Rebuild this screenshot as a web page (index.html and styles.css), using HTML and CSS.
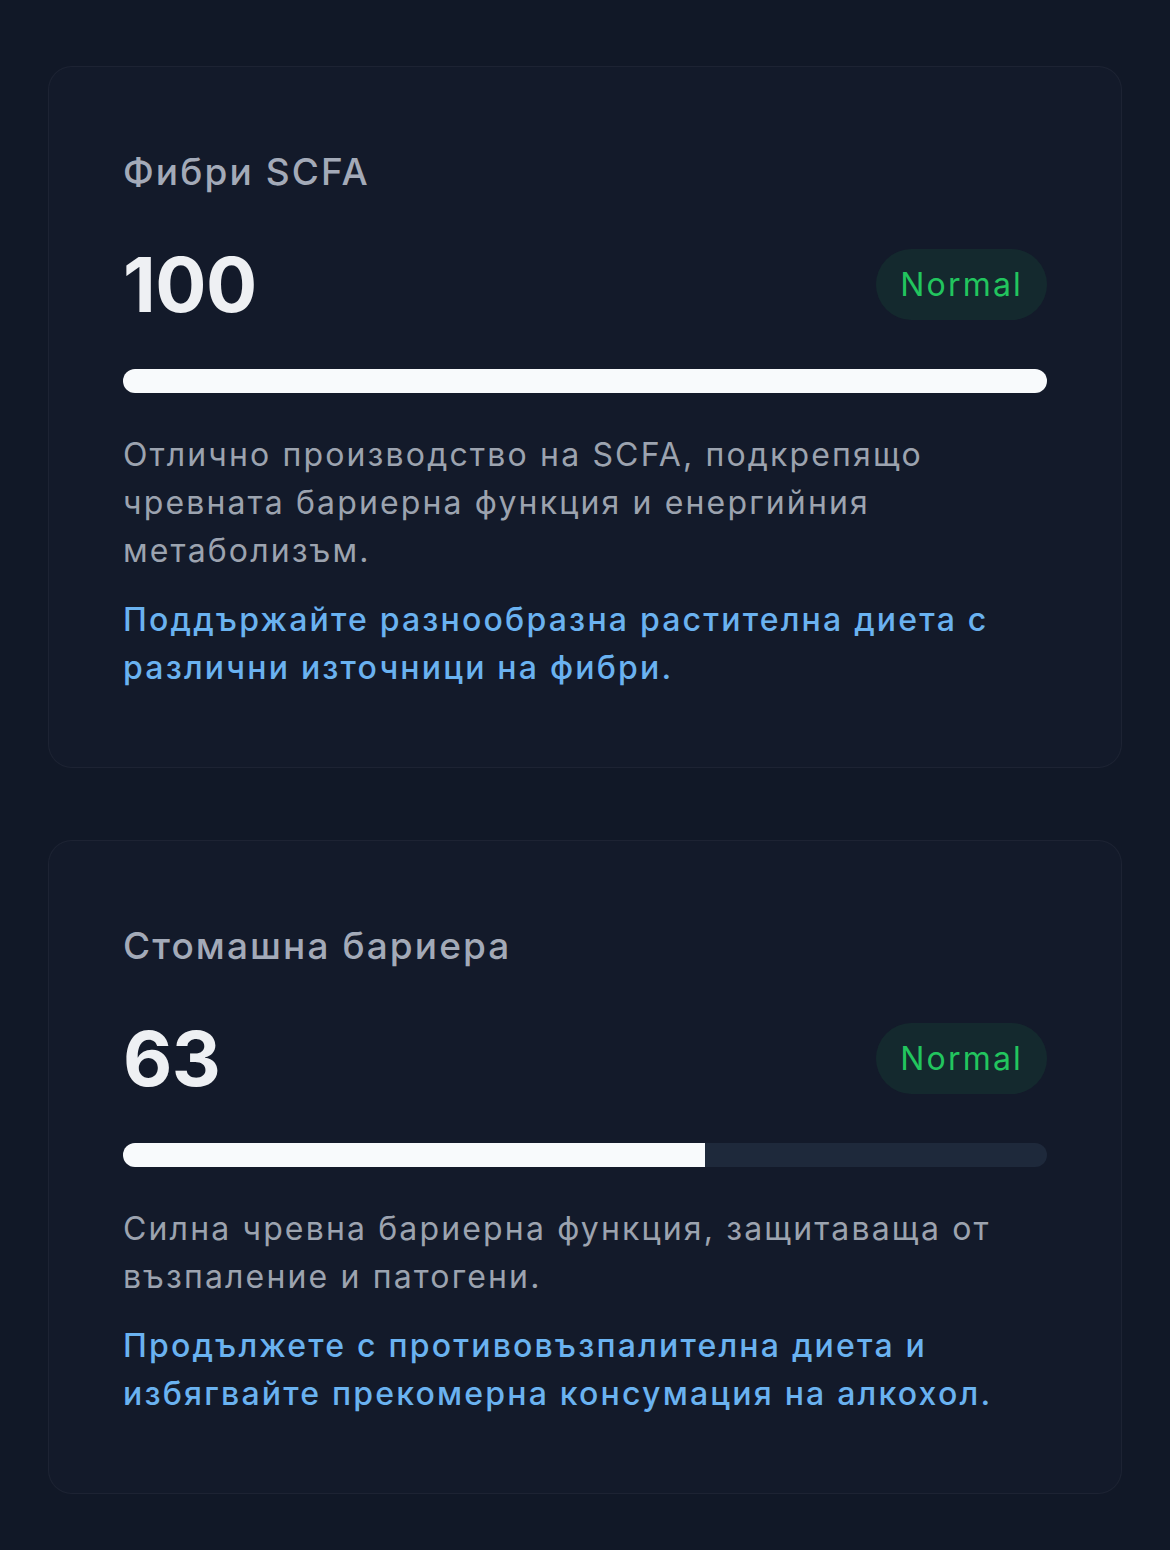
FILE: index.html
```html
<!DOCTYPE html>
<html lang="bg">
<head>
<meta charset="utf-8">
<link rel="stylesheet" href="styles.css">
</head>
<body>
<main class="list">
  <section class="card">
    <h2 class="title">Фибри SCFA</h2>
    <div class="row">
      <span class="score">100</span>
      <span class="badge">Normal</span>
    </div>
    <div class="track"><div class="fill" style="width:100%"></div></div>
    <p class="desc">Отлично производство на SCFA, подкрепящо чревната бариерна функция и енергийния метаболизъм.</p>
    <p class="rec">Поддържайте разнообразна растителна диета с различни източници на фибри.</p>
  </section>
  <section class="card">
    <h2 class="title">Стомашна бариера</h2>
    <div class="row">
      <span class="score">63</span>
      <span class="badge">Normal</span>
    </div>
    <div class="track"><div class="fill" style="width:63%"></div></div>
    <p class="desc">Силна чревна бариерна функция, защитаваща от възпаление и патогени.</p>
    <p class="rec">Продължете с противовъзпалителна диета и избягвайте прекомерна консумация на алкохол.</p>
  </section>
</main>
</body>
</html>
```

FILE: styles.css
```css
* { box-sizing: border-box; }
html, body { margin: 0; padding: 0; }
body {
  background: #111827;
  font-family: Inter, "Noto Sans", "DejaVu Sans", sans-serif;
  width: 1170px;
  min-height: 1550px;
}
.list {
  display: flex;
  flex-direction: column;
  gap: 72px;
  padding: 66px 48px 0;
}
.card {
  background: #131a2a;
  border: 1px solid rgba(255,255,255,0.045);
  border-radius: 24px;
  padding: 75px 74px 75px;
}
.title {
  margin: 0 0 42px;
  font-size: 37px;
  line-height: 60px;
  font-weight: 500;
  letter-spacing: 2.1px;
  color: #a3aab8;
}
.row {
  display: flex;
  align-items: center;
  justify-content: space-between;
  height: 80px;
}
.score {
  font-size: 76px;
  line-height: 80px;
  font-weight: 700;
  color: #eef0f3;
  letter-spacing: -0.5px;
}
.badge {
  font-size: 32px;
  line-height: 47px;
  padding: 12px 24px 12px 24px;
  border-radius: 999px;
  background: rgba(34,197,94,0.09);
  color: #22c55e;
  letter-spacing: 2.2px;
}
.track {
  margin-top: 45px;
  height: 24px;
  border-radius: 12px;
  background: #1e293b;
  overflow: hidden;
}
.fill {
  height: 100%;
  background: #f8fafc;
}
.desc {
  margin: 38px 0 0;
  font-size: 32px;
  line-height: 48px;
  letter-spacing: 2.15px;
  color: #9ca3af;
}
.rec {
  margin: 21px 0 0;
  font-size: 32px;
  line-height: 48px;
  font-weight: 500;
  letter-spacing: 2.2px;
  color: #6ab2f0;
}
```
